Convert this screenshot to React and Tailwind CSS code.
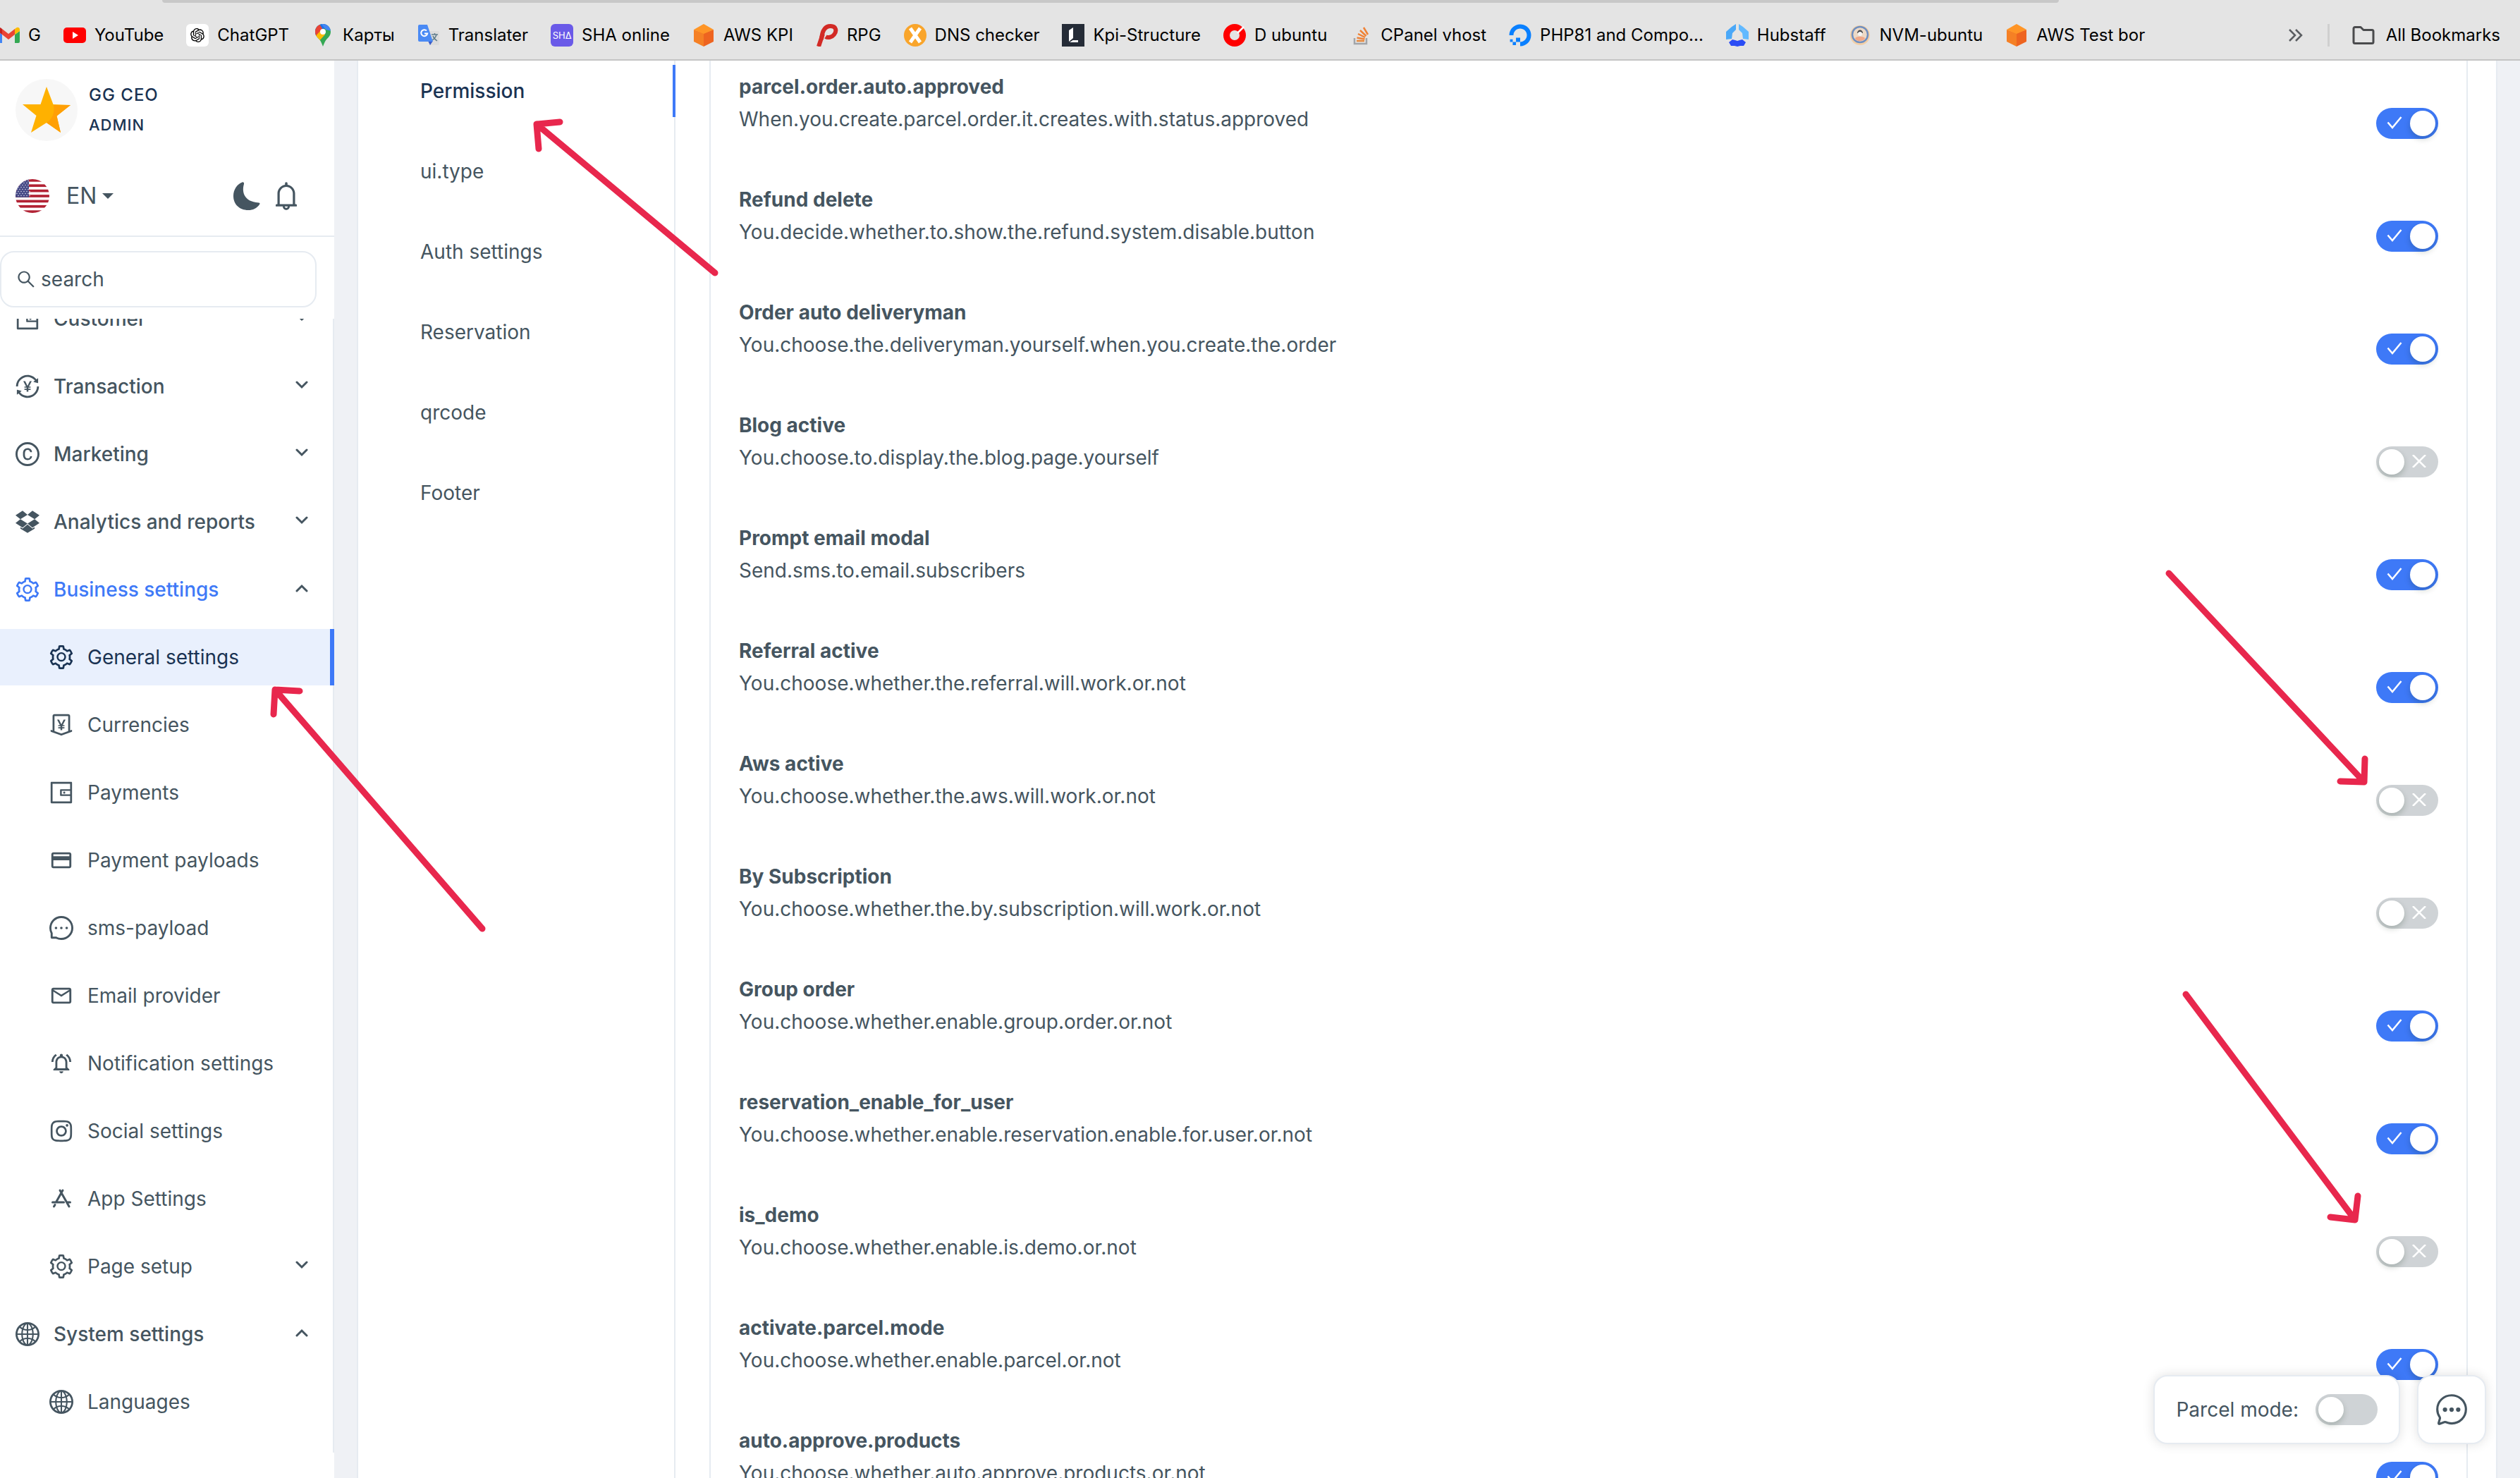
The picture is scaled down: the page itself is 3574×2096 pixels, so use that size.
import { useState } from "react";
import {
  AiOutlineTransaction,
  AiOutlineCopyright,
  AiOutlineDropbox,
  AiOutlineSetting,
  AiOutlineMoneyCollect,
  AiOutlineWallet,
  AiOutlineMessage,
  AiOutlineInstagram,
  AiOutlineGlobal,
  AiOutlineBell,
  AiOutlineSearch,
} from "react-icons/ai";
import { MdPayment, MdOutlineEmail, MdOutlineNotificationsActive } from "react-icons/md";
import { RiOpenaiFill } from "react-icons/ri";
import { FaDigitalOcean } from "react-icons/fa";
import { IoChatbubbleEllipsesOutline } from "react-icons/io5";

/* ---------- bookmark favicons ---------- */

const Gmail = () => (
  <svg viewBox="0 0 32 32" className="size-8">
    <path fill="#4285f4" d="M2 27h5V15L0 10v15a2 2 0 0 0 2 2z" />
    <path fill="#34a853" d="M25 27h5a2 2 0 0 0 2-2V10l-7 5z" />
    <path fill="#fbbc04" d="M25 7v8l7-5V8c0-3-3-4-5-2.500z" />
    <path fill="#ea4335" d="M7 15V7l9 7 9-7v8l-9 7z" />
    <path fill="#c5221f" d="M0 8v2l7 5V7L5 5.500C3 4 0 5 0 8z" />
  </svg>
);

const YouTube = () => (
  <svg viewBox="0 0 32 32" className="size-8">
    <rect y="5" width="32" height="22" rx="5" fill="#f00" />
    <path d="M13 11l8 5-8 5z" fill="#fff" />
  </svg>
);

const ChatGpt = () => (
  <span className="flex size-8 items-center justify-center rounded-md bg-white">
    <RiOpenaiFill className="size-6 text-black" />
  </span>
);

const MapPin = () => (
  <svg viewBox="0 0 32 32" className="size-8">
    <clipPath id="pin">
      <path d="M16 0C9.500 0 5 5 5 11c0 5 3 8 6 11 2.500 3 3.500 6 5 10 1.500-4 2.500-7 5-10 3-3 6-6 6-11C27 5 22.500 0 16 0z" />
    </clipPath>
    <g clipPath="url(#pin)">
      <rect width="32" height="32" fill="#34a853" />
      <path d="M4 20L24 0H0v20z" fill="#1a73e8" />
      <path d="M0 0h11l5 8-8 9H0z" fill="#ea4335" />
      <path d="M12 -2h16v12l-8-2z" fill="#4285f4" />
      <path d="M3 20L14 8l5 7L9 26z" fill="#fbbc04" />
    </g>
    <circle cx="16" cy="11" r="4" fill="#fff" />
  </svg>
);

const Translate = () => (
  <svg viewBox="0 0 32 32" className="size-8">
    <path d="M14 10h15a2 2 0 0 1 2 2v16a2 2 0 0 1-2 2H17z" fill="#dcdcdc" />
    <path d="M20 15h9M24.500 13v2M27 15c-1 4-3 6-6 8M22 17c1 3 3 5 6 7" stroke="#607d8b" strokeWidth="1.500" fill="none" />
    <path d="M15 24h7l-4 6z" fill="#3a5bc7" />
    <path d="M3 1h11l8 24H3a2 2 0 0 1-2-2V3a2 2 0 0 1 2-2z" fill="#4a8af4" />
    <path d="M13 9.500a4.500 4.500 0 1 0 1.200 4H10" stroke="#fff" strokeWidth="2" fill="none" />
  </svg>
);

const Sha = () => (
  <span className="flex size-8 items-center justify-center rounded-md bg-[#6a5ae8] text-[13px] leading-none text-white">SHΔ</span>
);

const AwsBox = () => (
  <svg viewBox="0 0 32 32" className="size-8">
    <path d="M2 8l14 5v19L2 25z" fill="#f58025" />
    <path d="M30 8l-14 5v19l14-7z" fill="#ee6420" />
    <path d="M16 0l14 8-14 6L2 8z" fill="#ff9526" />
  </svg>
);

const Rpg = () => (
  <svg viewBox="0 0 32 32" className="size-8">
    <path d="M4 32L10 14" stroke="#d22a25" strokeWidth="6" fill="none" />
    <path d="M8 22C9 8 14 3 21 3c8 0 9 7 5 12-3 4-9 5-12 3" stroke="#d22a25" strokeWidth="6" fill="none" />
  </svg>
);

const Dns = () => (
  <svg viewBox="0 0 32 32" className="size-8">
    <circle cx="16" cy="16" r="16" fill="#f9a52b" />
    <path d="M9 6l14 20M23 6L9 26" stroke="#fff" strokeWidth="5" />
  </svg>
);

const Kpi = () => (
  <svg viewBox="0 0 32 32" className="size-8">
    <rect width="32" height="32" fill="#252c37" />
    <path d="M10 9l6-4v15l-6 5zM11 26l6-4h6v4z" fill="#fff" />
    <path d="M16 20l7 0v3h-7z" fill="#252c37" />
  </svg>
);

const DUbuntu = () => (
  <svg viewBox="0 0 32 32" className="size-8">
    <circle cx="16" cy="16" r="11.500" stroke="#f00" strokeWidth="9" fill="none" />
    <path d="M20 13l9-9" stroke="#fff" strokeWidth="2.500" />
  </svg>
);

const StackOverflow = () => (
  <svg viewBox="0 0 32 32" className="size-8" fill="none">
    <path d="M7 20v8h17v-8" stroke="#a2a5a9" strokeWidth="2.500" />
    <path d="M10 24h11" stroke="#e8883a" strokeWidth="2.500" />
    <path d="M10.500 19.500l11 2M12 14l10 5M15 9l8.500 8M20 5l6 10" stroke="#ef8236" strokeWidth="2.500" />
  </svg>
);

const Hubstaff = () => (
  <svg viewBox="0 0 32 32" className="size-8">
    <path d="M8 4l6-4v8l-5 5-1 8-8 1V11z" fill="#4aa8f8" />
    <path d="M24 4l-6-4v8l5 5 1 8 8 1V11z" fill="#62b9ff" />
    <path d="M9 22l4 1 3 1 3-1 4-1 5 4-3 5-5 0-4 1-4-1-5 0-3-5z" fill="#2b4df5" />
  </svg>
);

const Nvm = () => (
  <svg viewBox="0 0 32 32" className="size-8">
    <circle cx="16" cy="16" r="14" fill="#f3cfa6" />
    <circle cx="16" cy="15" r="11" fill="#ecd9c6" stroke="#6f8fc0" strokeWidth="2.500" />
    <path d="M12 13c0-6 8-6 8 0z" fill="#4b4b4b" />
    <ellipse cx="16" cy="14" rx="3" ry="3" fill="#f4f4f4" />
    <path d="M9 20c3-3 11-3 14 0-1 5-13 6-14 0z" fill="#f0a889" />
  </svg>
);

const bookmarks = [
  ["G", Gmail],
  ["YouTube", YouTube],
  ["ChatGPT", ChatGpt],
  ["Карты", MapPin],
  ["Translater", Translate],
  ["SHA online", Sha],
  ["AWS KPI", AwsBox],
  ["RPG", Rpg],
  ["DNS checker", Dns],
  ["Kpi-Structure", Kpi],
  ["D ubuntu", DUbuntu],
  ["CPanel vhost", StackOverflow],
  ["PHP81 and Compo...", () => <FaDigitalOcean className="size-8 text-[#0a80ff]" />],
  ["Hubstaff", Hubstaff],
  ["NVM-ubuntu", Nvm],
  ["AWS Test bor", AwsBox],
];

function BookmarksBar() {
  return (
    <header className="flex h-[86px] shrink-0 flex-col border-b-2 border-[#c4c4c4] bg-[#e4e4e4] text-black">
      <div className="ml-[230px] mr-[654px] h-1 shrink-0 rounded-b-full bg-[#c8c8c8]" />
      <div className="-ml-1 flex flex-1 items-center pr-7 pt-3 text-2xl leading-8">
        <nav aria-label="Bookmarks" className="flex flex-1 items-center gap-8">
          {bookmarks.map(([name, Icon]) => (
            <a key={name} href="#" className="flex shrink-0 items-center gap-3 whitespace-nowrap">
              <Icon />
              {name}
            </a>
          ))}
        </nav>
        <button aria-label="More bookmarks" className="mr-[34px]">
          <svg viewBox="0 0 22 18" className="h-[18px] w-[22px]" fill="none" stroke="#5a5d61" strokeWidth="2.500">
            <path d="M2 1l8 8-8 8M11 1l8 8-8 8" />
          </svg>
        </button>
        <span className="mr-8 h-8 w-[3px] bg-[#cfcfcf]" />
        <button className="flex items-center gap-4 whitespace-nowrap">
          <svg viewBox="0 0 32 26" className="h-[26px] w-8" fill="none" stroke="#4a4b4d" strokeWidth="3" strokeLinejoin="round">
            <path d="M2 3.500a2 2 0 0 1 2-2h8l4 4h12a2 2 0 0 1 2 2v15a2 2 0 0 1-2 2H4a2 2 0 0 1-2-2z" />
          </svg>
          All Bookmarks
        </button>
      </div>
    </header>
  );
}

/* ---------- sidebar ---------- */

const ant = (Icon) => () => <Icon viewBox="64 64 896 896" className="size-[34px] shrink-0" />;
const md = (Icon) => () => <Icon className="size-[34px] shrink-0" />;

const AppStoreIcon = () => (
  <svg viewBox="0 0 34 34" className="size-[34px] shrink-0" fill="none" stroke="currentColor" strokeWidth="3" strokeLinecap="round">
    <path d="M15 5l13 23M19 5l-9 16M6.500 28l1.500-2.500M4.500 22h16M26 22h3.500" />
  </svg>
);

const menu = [
  { label: "Customer", icon: ant(AiOutlineWallet), arrow: "down" },
  { label: "Transaction", icon: ant(AiOutlineTransaction), arrow: "down" },
  { label: "Marketing", icon: ant(AiOutlineCopyright), arrow: "down" },
  { label: "Analytics and reports", icon: ant(AiOutlineDropbox), arrow: "down" },
  { label: "Business settings", icon: ant(AiOutlineSetting), arrow: "up", open: true },
  { label: "General settings", icon: ant(AiOutlineSetting), sub: true, active: true },
  { label: "Currencies", icon: ant(AiOutlineMoneyCollect), sub: true },
  { label: "Payments", icon: ant(AiOutlineWallet), sub: true },
  { label: "Payment payloads", icon: md(MdPayment), sub: true },
  { label: "sms-payload", icon: ant(AiOutlineMessage), sub: true },
  { label: "Email provider", icon: md(MdOutlineEmail), sub: true },
  { label: "Notification settings", icon: md(MdOutlineNotificationsActive), sub: true },
  { label: "Social settings", icon: ant(AiOutlineInstagram), sub: true },
  { label: "App Settings", icon: AppStoreIcon, sub: true },
  { label: "Page setup", icon: ant(AiOutlineSetting), sub: true, arrow: "down" },
  { label: "System settings", icon: ant(AiOutlineGlobal), arrow: "up" },
  { label: "Languages", icon: ant(AiOutlineGlobal), sub: true },
];

const Chevron = ({ up }) => (
  <svg viewBox="0 0 20 12" className="mb-1 ml-auto h-3 w-5 shrink-0" fill="none" stroke="#455560" strokeWidth="3" strokeLinecap="round">
    <path d={up ? "M3 10l7-7 7 7" : "M3 2l7 7 7-7"} />
  </svg>
);

function MenuItem({ label, icon: Icon, sub, active, open, arrow }) {
  const Tag = arrow ? "button" : "a";
  const tone = active
    ? "border-r-[6px] border-[#3e79f7] bg-[#e9f0fd] text-[#1a3353]"
    : open
      ? "text-[#3e79f7]"
      : "text-[#455560]";
  return (
    <li>
      <Tag
        {...(arrow ? { "aria-expanded": arrow === "up" } : { href: "#" })}
        className={`flex h-20 w-full items-center gap-5 pr-9 text-left ${sub ? "pl-[70px]" : "pl-[22px] font-medium"} ${tone}`}
      >
        <Icon />
        {label}
        {arrow && <Chevron up={arrow === "up"} />}
      </Tag>
    </li>
  );
}

const Flag = () => (
  <svg viewBox="0 0 48 48" className="size-12 rounded-full">
    <rect width="48" height="48" fill="#fff" />
    {[0, 1, 2, 3, 4, 5, 6].map((i) => (
      <rect key={i} y={i * 7.38} width="48" height="3.700" fill="#b22234" />
    ))}
    <rect width="19" height="25.800" fill="#464a86" />
    {[0, 1, 2, 3, 4, 5, 6, 7].map((r) =>
      [0, 1, 2, 3, 4].map((c) => (
        <circle key={`${r}-${c}`} cx={2 + c * 4 + (r % 2) * 2} cy={2.5 + r * 3} r="0.800" fill="#d5d6e8" />
      )),
    )}
  </svg>
);

function Sidebar() {
  return (
    <aside className="flex w-[474px] shrink-0 flex-col bg-white text-[28px] leading-10 text-[#455560]">
      <div className="flex h-[250px] flex-col justify-between border-b-2 border-[#e6ebf1] pb-8 pl-[22px] pt-[26px]">
        <div className="flex items-center gap-4">
          <svg viewBox="0 0 88 88" className="size-[88px] rounded-full bg-[#f7f7f7]">
            <path d="M44 11l9.500 25 24.500 1-19.500 15.500L64 76 44 62 22 76l7.500-24L10 36l25.500 0z" fill="#ffb100" />
            <path d="M54 37l24 0-19.500 15.500L64 76 44 62c8-5 12-14 10-25z" fill="#ff9f05" />
          </svg>
          <div className="font-medium leading-[43px] tracking-[1px] text-[#1a3353]">
            <p className="text-2xl leading-[43px]">GG CEO</p>
            <p className="text-[22px] leading-[43px]">ADMIN</p>
          </div>
        </div>
        <div className="flex items-center pr-12">
          <Flag />
          <button className="ml-6 flex items-center gap-2 text-[32px]">
            EN
            <svg viewBox="0 0 16 8" className="h-2 w-4">
              <path d="M0 0h16L8 8z" fill="#455560" />
            </svg>
          </button>
          <button aria-label="Dark mode" className="ml-auto">
            <svg viewBox="0 0 40 40" className="size-10">
              <path d="M13.500 .5C15 0 16.500 1 16 3c-3 10-1 25 21 26.500 1.500 0 2 1 1 2.500C34 37.500 29 40 22 40 9.500 40 1 31.500 1 20 1 11 6 3.500 13.500 .5z" fill="#455560" />
            </svg>
          </button>
          <button aria-label="Notifications" className="ml-4">
            <AiOutlineBell viewBox="64 64 896 896" className="size-10" />
          </button>
        </div>
      </div>
      <div className="h-[116px] pr-[25px] pt-5">
        <label className="flex h-20 items-center gap-2 rounded-[20px] border-2 border-[#e6ebf1] pl-[22px]">
          <AiOutlineSearch viewBox="64 64 896 896" className="size-[26px]" />
          <input type="text" placeholder="search" aria-label="search" className="min-w-0 flex-1 bg-transparent outline-none placeholder:text-[#455560] placeholder:opacity-100" />
        </label>
      </div>
      <nav aria-label="Main" className="mb-9 min-h-0 flex-1 overflow-hidden shadow-[inset_-2px_0_0_#e6ebf1]">
        <ul className="-mt-10 flex flex-col gap-4">
          {menu.map((m) => (
            <MenuItem key={m.label} {...m} />
          ))}
        </ul>
      </nav>
    </aside>
  );
}

/* ---------- settings ---------- */

function Switch({ id, defaultOn, marks = true }) {
  const [on, setOn] = useState(defaultOn);
  return (
    <span className="relative h-11 w-[88px] shrink-0">
      <input
        id={id}
        type="checkbox"
        role="switch"
        checked={on}
        onChange={() => setOn(!on)}
        className="block h-11 w-[88px] cursor-pointer appearance-none rounded-full bg-[#cfd3d6] checked:bg-[#3e79f7]"
      />
      <span
        className={`pointer-events-none absolute top-1 size-9 rounded-full bg-white shadow-[0_4px_8px_rgba(0,35,11,0.2)] ${on ? "right-1" : "left-1"}`}
      />
      {marks && (
        <svg
          viewBox="0 0 22 18"
          className={`pointer-events-none absolute top-3 h-[18px] w-[22px] ${on ? "left-[15px]" : "right-4"}`}
          fill="none"
          stroke="#fff"
          strokeWidth="2.500"
        >
          <path d={on ? "M1.500 8.500l6.500 7.500L20.500 1" : "M2 0l18 18M20 0L2 18"} />
        </svg>
      )}
    </span>
  );
}

const tabs = ["Permission", "ui.type", "Auth settings", "Reservation", "qrcode", "Footer"];

const permissions = [
  ["parcel.order.auto.approved", "When.you.create.parcel.order.it.creates.with.status.approved", true],
  ["Refund delete", "You.decide.whether.to.show.the.refund.system.disable.button", true],
  ["Order auto deliveryman", "You.choose.the.deliveryman.yourself.when.you.create.the.order", true],
  ["Blog active", "You.choose.to.display.the.blog.page.yourself", false],
  ["Prompt email modal", "Send.sms.to.email.subscribers", true],
  ["Referral active", "You.choose.whether.the.referral.will.work.or.not", true],
  ["Aws active", "You.choose.whether.the.aws.will.work.or.not", false],
  ["By Subscription", "You.choose.whether.the.by.subscription.will.work.or.not", false],
  ["Group order", "You.choose.whether.enable.group.order.or.not", true],
  ["reservation_enable_for_user", "You.choose.whether.enable.reservation.enable.for.user.or.not", true],
  ["is_demo", "You.choose.whether.enable.is.demo.or.not", false],
  ["activate.parcel.mode", "You.choose.whether.enable.parcel.or.not", true],
  ["auto.approve.products", "You.choose.whether.auto.approve.products.or.not", true],
];

function Settings() {
  return (
    <main className="flex min-w-0 flex-1 px-8 text-[28px] text-[#455560]">
      <div className="flex min-w-0 flex-1 gap-12 overflow-hidden border-x-2 border-[#e6ebf1] bg-white px-10">
        <div role="tablist" aria-orientation="vertical" className="flex w-[410px] shrink-0 flex-col gap-10 pt-1.5 shadow-[inset_-2px_0_0_#e6ebf1]">
          {tabs.map((t, i) => (
            <button
              key={t}
              role="tab"
              aria-selected={i === 0}
              className={`h-[74px] shrink-0 px-12 text-left ${i === 0 ? "border-r-4 border-[#3e79f7] font-medium text-[#1a3353]" : ""}`}
            >
              {t}
            </button>
          ))}
        </div>
        <div className="min-w-0 flex-1 border-x-2 border-[#e6ebf1] px-10 pt-3.5">
          {permissions.map(([title, text, on], i) => (
            <div key={title} className="flex h-40 items-start justify-between">
              <label htmlFor={`perm-${i}`} className="leading-[46px]">
                <span className="block font-bold">{title}</span>
                <span className="block">{text}</span>
              </label>
              <span className="flex pt-[53px]">
                <Switch id={`perm-${i}`} defaultOn={on} />
              </span>
            </div>
          ))}
        </div>
      </div>
    </main>
  );
}

function FloatingBar() {
  return (
    <div className="absolute bottom-12 right-12 flex gap-6 text-[28px] text-[#455560]">
      <div className="flex h-[98px] items-center gap-6 rounded-[20px] border-2 border-[#e6ebf1] bg-white px-[30px] shadow-[0_0_16px_rgba(0,0,0,0.12)]">
        <label htmlFor="parcel-mode">Parcel mode:</label>
        <Switch id="parcel-mode" defaultOn={false} marks={false} />
      </div>
      <button
        aria-label="Open chat"
        className="flex size-[98px] items-center justify-center rounded-[20px] border-2 border-[#e6ebf1] bg-white shadow-[0_0_16px_rgba(0,0,0,0.12)]"
      >
        <IoChatbubbleEllipsesOutline className="size-[50px]" />
      </button>
    </div>
  );
}

/* ---------- hand-drawn pointers ---------- */

const arrows = [
  { at: "left-[750px] top-[166px]", w: 280, h: 240, d: "M264 221L11 10M44 7L11 10L14 45" },
  { at: "left-[378px] top-[968px]", w: 320, h: 360, d: "M306 349L12 10M47 12L12 10L10 45" },
  { at: "right-[210px] top-[800px]", w: 300, h: 320, d: "M12 13L289 309M255 308L289 309L290 276" },
  { at: "right-[220px] top-[1396px]", w: 260, h: 344, d: "M6 14L246 334M211 330L246 334L250 300" },
];

function Arrows() {
  return arrows.map((a) => (
    <svg
      key={a.at}
      aria-hidden="true"
      width={a.w}
      height={a.h}
      className={`pointer-events-none absolute overflow-visible ${a.at}`}
      fill="none"
      stroke="#e8274d"
      strokeWidth="9"
      strokeLinecap="round"
      strokeLinejoin="round"
    >
      <path d={a.d} />
    </svg>
  ));
}

export default function App() {
  return (
    <div className="relative flex h-screen flex-col overflow-hidden bg-[#eff1f5] font-[Inter,sans-serif]">
      <BookmarksBar />
      <div className="flex min-h-0 flex-1">
        <Sidebar />
        <Settings />
      </div>
      <FloatingBar />
      <Arrows />
    </div>
  );
}
